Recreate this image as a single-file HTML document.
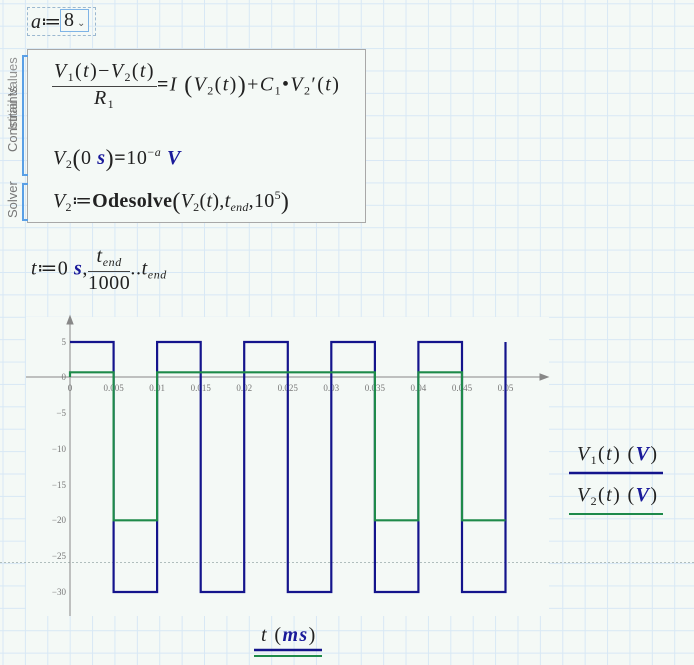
<!DOCTYPE html>
<html><head><meta charset="utf-8"><style>
body{margin:0;width:694px;height:665px;overflow:hidden;position:relative;background-color:#f4f9f6;
background-image:linear-gradient(to right,#d8e8f5 1.2px,transparent 1.2px),linear-gradient(to bottom,#d8e8f5 1.2px,transparent 1.2px);
background-size:22.4px 22.4px;background-position:2.5px 3.3px;font-family:"Liberation Serif",serif;}
.m{position:absolute;font-family:"Liberation Serif",serif;font-size:20px;letter-spacing:1.4px;color:#222;white-space:nowrap;}
i{font-style:italic}
.b{color:#1a1a9a;font-weight:bold;font-style:italic}
sub{font-size:12px;vertical-align:-4px}
sup{font-size:12px;vertical-align:8px}
.p{font-size:24px;vertical-align:-2px}
.frac{display:inline-block;vertical-align:middle;text-align:center}
.frac>span{display:block}
.frac>.num{border-bottom:1px solid #444;padding:0 2px 1px}
</style></head><body>
<div style="position:absolute;left:27px;top:7px;width:67px;height:27px;border:1px dashed #9bb8d0;"></div>
<div class="m" style="left:31px;top:9px;letter-spacing:0"><i>a</i>≔</div>
<div style="position:absolute;left:60px;top:9px;width:27px;height:21px;border:1.5px solid #7fb4e6;background:#f4f9f6;"></div>
<div class="m" style="left:64px;top:9px;letter-spacing:0">8<span style="font-size:10px;font-family:'Liberation Sans';color:#555;margin-left:3px;">⌄</span></div>

<div style="position:absolute;left:27px;top:49px;width:337px;height:172px;border:1px solid #a8a8a8;background:#f4f9f6;"></div>
<div style="position:absolute;left:22px;top:55px;width:4px;height:117px;border:2px solid #5aa0e6;border-right:none;"></div>
<div style="position:absolute;left:22px;top:183px;width:4px;height:34px;border:2px solid #5aa0e6;border-right:none;"></div>
<div style="position:absolute;left:5px;top:152px;transform:rotate(-90deg);transform-origin:left top;font-family:'Liberation Sans';font-size:13px;color:#777;">Constraints</div>
<div style="position:absolute;left:5px;top:130px;transform:rotate(-90deg);transform-origin:left top;font-family:'Liberation Sans';font-size:13px;color:#777;opacity:.8">Initial Values</div>
<div style="position:absolute;left:5px;top:218px;transform:rotate(-90deg);transform-origin:left top;font-family:'Liberation Sans';font-size:13px;color:#777;">Solver</div>

<div class="m" style="left:52px;top:60px;"><span class="frac"><span class="num"><i>V</i><sub>1</sub>(<i>t</i>)−<i>V</i><sub>2</sub>(<i>t</i>)</span><span><i>R</i><sub>1</sub></span></span><b>=</b><i>I</i> <span class="p">(</span><i>V</i><sub>2</sub>(<i>t</i>)<span class="p">)</span>+<i>C</i><sub>1</sub>•<i>V</i><sub>2</sub>′(<i>t</i>)</div>
<div class="m" style="left:53px;top:145px;letter-spacing:0.6px"><i>V</i><sub>2</sub><span class="p">(</span>0 <span class="b">s</span><span class="p">)</span><b>=</b>10<sup>−<i>a</i></sup> <span class="b">V</span></div>
<div class="m" style="left:53px;top:188px;letter-spacing:0.3px"><i>V</i><sub>2</sub>≔<b>Odesolve</b><span class="p">(</span><i>V</i><sub>2</sub>(<i>t</i>),<i>t</i><sub><i>end</i></sub>,10<sup>5</sup><span class="p">)</span></div>
<div class="m" style="left:31px;top:245px;letter-spacing:0.6px"><i>t</i>≔0 <span class="b">s</span>,<span class="frac"><span class="num"><i>t</i><sub><i>end</i></sub></span><span>1000</span></span>..<i>t</i><sub><i>end</i></sub></div>

<svg style="position:absolute;left:0;top:0" width="694" height="665">
<rect x="26" y="317" width="523" height="299" fill="#f4f9f6"/>
<line x1="0" y1="562.5" x2="694" y2="562.5" stroke="#9aa" stroke-dasharray="2,2" stroke-width="0.8"/>
<g stroke="#888" stroke-width="1" fill="#888">
<line x1="26" y1="377" x2="542" y2="377"/><polygon points="548,377 540,374 540,380"/>
<line x1="70" y1="322" x2="70" y2="616"/><polygon points="70,316 67,324 73,324"/>
</g>
<g font-family="Liberation Serif" font-size="9" fill="#777" text-anchor="end">
<text x="66" y="345">5</text><text x="66" y="380">0</text><text x="66" y="416">−5</text><text x="66" y="452">−10</text><text x="66" y="488">−15</text><text x="66" y="523">−20</text><text x="66" y="559">−25</text><text x="66" y="595">−30</text>
</g>
<g font-family="Liberation Serif" font-size="9" fill="#777" text-anchor="middle">
<text x="70" y="391">0</text><text x="113.6" y="391">0.005</text><text x="157.1" y="391">0.01</text><text x="200.7" y="391">0.015</text><text x="244.2" y="391">0.02</text><text x="287.8" y="391">0.025</text><text x="331.3" y="391">0.03</text><text x="374.9" y="391">0.035</text><text x="418.4" y="391">0.04</text><text x="462" y="391">0.045</text><text x="505.5" y="391">0.05</text>
</g>
<polyline fill="none" stroke="#14148c" stroke-width="2.2" points="70,342 113.6,342 113.6,592 157.1,592 157.1,342 200.7,342 200.7,592 244.2,592 244.2,342 287.8,342 287.8,592 331.3,592 331.3,342 374.9,342 374.9,592 418.4,592 418.4,342 462,342 462,592 505.5,592 505.5,342"/>
<polyline fill="none" stroke="#1e8a4a" stroke-width="2.2" points="70,377 70,372.3 113.6,372.3 113.6,520.3 157.1,520.3 157.1,372.3 374.9,372.3 374.9,520.3 418.4,520.3 418.4,372.3 462,372.3 462,520.3 505.5,520.3"/>
<line x1="569" y1="473" x2="663" y2="473" stroke="#14148c" stroke-width="2.5"/>
<line x1="569" y1="514" x2="663" y2="514" stroke="#1e8a4a" stroke-width="2"/>
<line x1="254" y1="650" x2="322" y2="650" stroke="#14148c" stroke-width="2.5"/>
<line x1="254" y1="656" x2="322" y2="656" stroke="#1e8a4a" stroke-width="2"/>
</svg>
<div class="m" style="left:577px;top:443px;"><i>V</i><sub>1</sub>(<i>t</i>)  (<span class="b">V</span>)</div>
<div class="m" style="left:577px;top:484px;"><i>V</i><sub>2</sub>(<i>t</i>)  (<span class="b">V</span>)</div>
<div class="m" style="left:261px;top:624px;"><i>t</i>  (<span class="b">ms</span>)</div>
</body></html>
